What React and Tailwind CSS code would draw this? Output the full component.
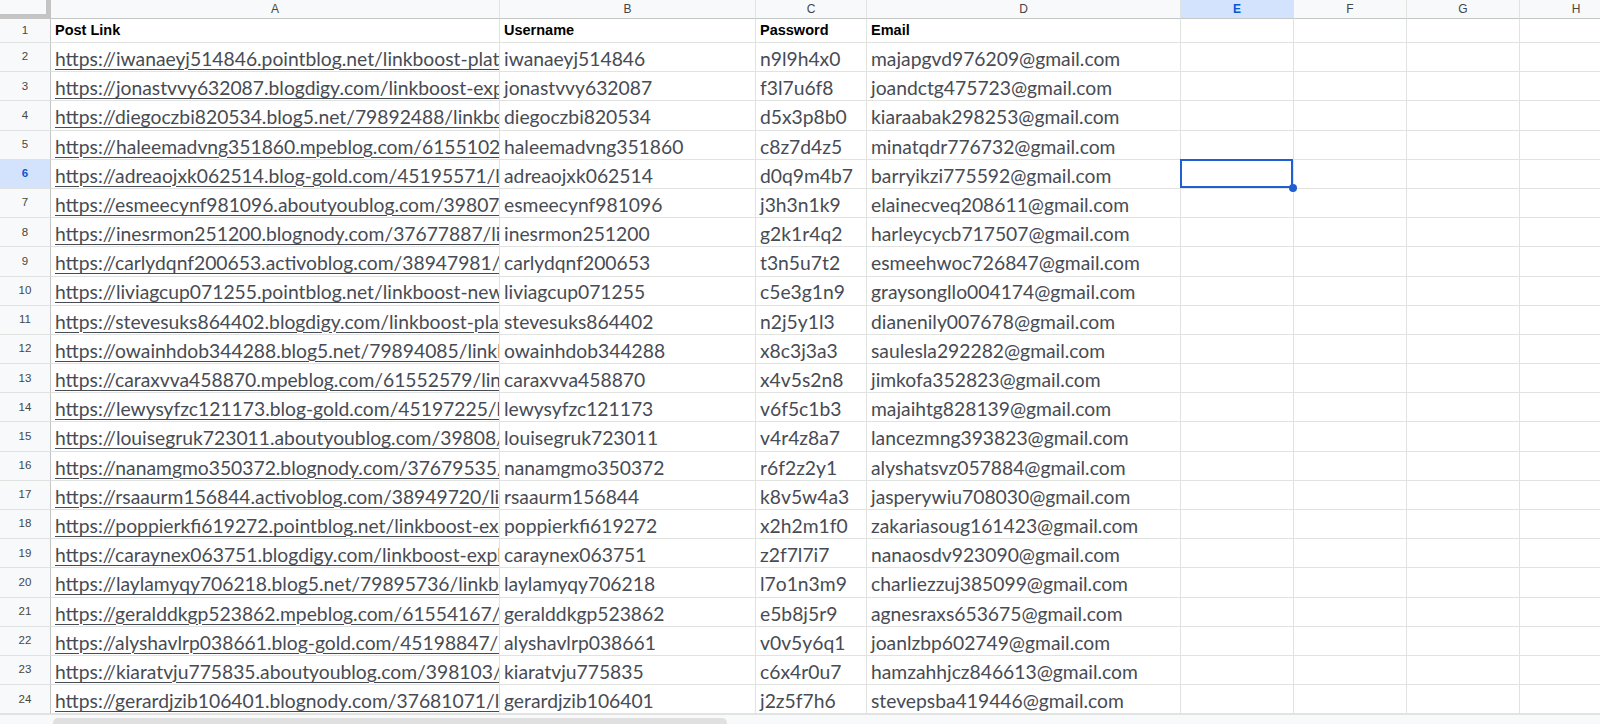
import React from 'react';

const COLS = [
  { key: 'A', w: 'w-[449px]' },
  { key: 'B', w: 'w-[256px]' },
  { key: 'C', w: 'w-[111px]' },
  { key: 'D', w: 'w-[314px]' },
  { key: 'E', w: 'w-[113px]' },
  { key: 'F', w: 'w-[113px]' },
  { key: 'G', w: 'w-[113px]' },
  { key: 'H', w: 'w-[113px]' },
];

const ROWS = [
  ['https://iwanaeyj514846.pointblog.net/linkboost-platform-review', 'iwanaeyj514846', 'n9l9h4x0', 'majapgvd976209@gmail.com'],
  ['https://jonastvvy632087.blogdigy.com/linkboost-explained', 'jonastvvy632087', 'f3l7u6f8', 'joandctg475723@gmail.com'],
  ['https://diegoczbi820534.blog5.net/79892488/linkboost', 'diegoczbi820534', 'd5x3p8b0', 'kiaraabak298253@gmail.com'],
  ['https://haleemadvng351860.mpeblog.com/61551024/linkboost', 'haleemadvng351860', 'c8z7d4z5', 'minatqdr776732@gmail.com'],
  ['https://adreaojxk062514.blog-gold.com/45195571/linkboost', 'adreaojxk062514', 'd0q9m4b7', 'barryikzi775592@gmail.com'],
  ['https://esmeecynf981096.aboutyoublog.com/39807/linkboost', 'esmeecynf981096', 'j3h3n1k9', 'elainecveq208611@gmail.com'],
  ['https://inesrmon251200.blognody.com/37677887/linkboost', 'inesrmon251200', 'g2k1r4q2', 'harleycycb717507@gmail.com'],
  ['https://carlydqnf200653.activoblog.com/38947981/linkboost', 'carlydqnf200653', 't3n5u7t2', 'esmeehwoc726847@gmail.com'],
  ['https://liviagcup071255.pointblog.net/linkboost-new', 'liviagcup071255', 'c5e3g1n9', 'graysongllo004174@gmail.com'],
  ['https://stevesuks864402.blogdigy.com/linkboost-platform', 'stevesuks864402', 'n2j5y1l3', 'dianenily007678@gmail.com'],
  ['https://owainhdob344288.blog5.net/79894085/linkboost', 'owainhdob344288', 'x8c3j3a3', 'saulesla292282@gmail.com'],
  ['https://caraxvva458870.mpeblog.com/61552579/linkboost', 'caraxvva458870', 'x4v5s2n8', 'jimkofa352823@gmail.com'],
  ['https://lewysyfzc121173.blog-gold.com/45197225/linkboost', 'lewysyfzc121173', 'v6f5c1b3', 'majaihtg828139@gmail.com'],
  ['https://louisegruk723011.aboutyoublog.com/39808/linkboost', 'louisegruk723011', 'v4r4z8a7', 'lancezmng393823@gmail.com'],
  ['https://nanamgmo350372.blognody.com/37679535/linkboost', 'nanamgmo350372', 'r6f2z2y1', 'alyshatsvz057884@gmail.com'],
  ['https://rsaaurm156844.activoblog.com/38949720/linkboost', 'rsaaurm156844', 'k8v5w4a3', 'jasperywiu708030@gmail.com'],
  ['https://poppierkfi619272.pointblog.net/linkboost-explained', 'poppierkfi619272', 'x2h2m1f0', 'zakariasoug161423@gmail.com'],
  ['https://caraynex063751.blogdigy.com/linkboost-explained', 'caraynex063751', 'z2f7l7i7', 'nanaosdv923090@gmail.com'],
  ['https://laylamyqy706218.blog5.net/79895736/linkboost', 'laylamyqy706218', 'l7o1n3m9', 'charliezzuj385099@gmail.com'],
  ['https://geralddkgp523862.mpeblog.com/61554167/linkboost', 'geralddkgp523862', 'e5b8j5r9', 'agnesraxs653675@gmail.com'],
  ['https://alyshavlrp038661.blog-gold.com/45198847/linkboost', 'alyshavlrp038661', 'v0v5y6q1', 'joanlzbp602749@gmail.com'],
  ['https://kiaratvju775835.aboutyoublog.com/398103/linkboost', 'kiaratvju775835', 'c6x4r0u7', 'hamzahhjcz846613@gmail.com'],
  ['https://gerardjzib106401.blognody.com/37681071/linkboost', 'gerardjzib106401', 'j2z5f7h6', 'stevepsba419446@gmail.com'],
];

const HEADERS = ['Post Link', 'Username', 'Password', 'Email'];

const SELECTED_ROW = 6;
const SELECTED_COL = 'E';

function RowHeader({ n, h }) {
  const active = n === SELECTED_ROW;
  return (
    <div
      className={`${h} w-[51px] shrink-0 flex items-center justify-center border-r border-b border-r-[#c4c7c5] border-b-[#e1e3e1] text-[11.5px] font-['Liberation_Sans',Arial,sans-serif] ${
        active ? 'bg-[#d3e3fd] text-[#0b57d0] font-bold' : 'bg-[#f8f9fa] text-[#444746]'
      }`}
    >
      {n}
    </div>
  );
}

function Cell({ col, h, children, selected }) {
  return (
    <div className={`${col.w} ${h} shrink-0 relative border-r border-b border-[#e1e3e1]`}>
      <div className="h-full flex items-center pl-[4px] overflow-hidden">{children}</div>
      {selected && (
        <>
          <div className="absolute -left-px -top-px right-0 bottom-0 border-2 border-[#1f5fd1]" />
          <div className="absolute -right-[4px] -bottom-[4px] w-[8px] h-[8px] rounded-full bg-[#1f5fd1] z-10" />
        </>
      )}
    </div>
  );
}

export default function App() {
  return (
    <div className="w-[1600px] h-[724px] overflow-hidden bg-white flex flex-col">
      {/* column letters */}
      <div className="flex h-[19px] shrink-0">
        <div className="w-[51px] shrink-0 bg-[#f8f9fa] border-r-[5px] border-b-[5px] border-[#c4c4c4]" />
        {COLS.map((c) => {
          const active = c.key === SELECTED_COL;
          return (
            <div
              key={c.key}
              className={`${c.w} shrink-0 flex items-center justify-center border-r border-b border-r-[#e1e3e1] border-b-[#c4c7c5] text-[12px] font-['Liberation_Sans',Arial,sans-serif] ${
                active ? 'bg-[#d3e3fd] text-[#0b57d0] font-bold' : 'bg-[#f8f9fa] text-[#444746]'
              }`}
            >
              {c.key}
            </div>
          );
        })}
      </div>

      {/* header row */}
      <div className="flex shrink-0">
        <RowHeader n={1} h="h-[24px]" />
        {COLS.map((c, i) => (
          <Cell key={c.key} col={c} h="h-[24px]">
            <span className="text-[14.5px] font-bold text-black font-['Liberation_Sans',Arial,sans-serif] whitespace-nowrap">
              {HEADERS[i] ?? ''}
            </span>
          </Cell>
        ))}
      </div>

      {/* data rows */}
      {ROWS.map((r, ri) => {
        const n = ri + 2;
        return (
          <div key={n} className="flex shrink-0">
            <RowHeader n={n} h="h-[29.2px]" />
            {COLS.map((c, ci) => (
              <Cell key={c.key} col={c} h="h-[29.2px]" selected={n === SELECTED_ROW && c.key === SELECTED_COL}>
                {ci < 4 && (
                  <span
                    className={`text-[19.3px] leading-none pt-[3px] whitespace-nowrap text-[#474b54] font-['Lato',sans-serif] ${
                      ci === 0 ? 'underline decoration-1 underline-offset-[3px]' : ''
                    }`}
                  >
                    {r[ci]}
                  </span>
                )}
              </Cell>
            ))}
          </div>
        );
      })}

      {/* horizontal scrollbar */}
      <div className="flex-1 bg-[#f8f9fa] border-t border-[#e1e3e1] pl-[53px] pt-[3px]">
        <div className="w-[674px] h-[10px] rounded-[5px] bg-[#e0e0e0]" />
      </div>
    </div>
  );
}
